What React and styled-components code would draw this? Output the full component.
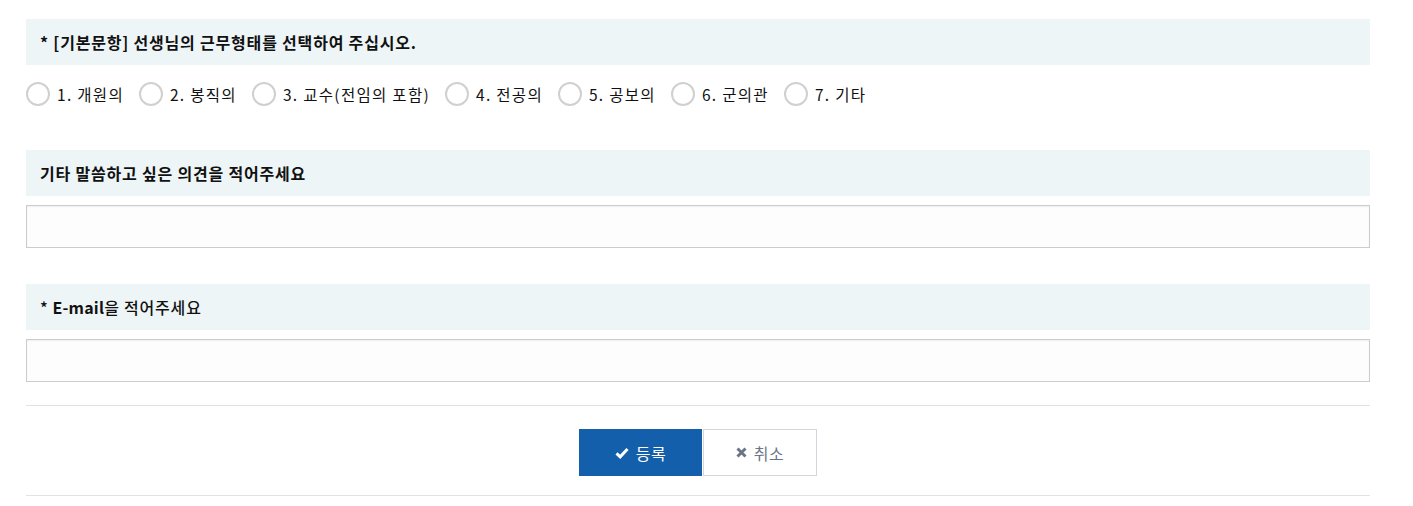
import React, { useState } from 'react';
import styled, { createGlobalStyle } from 'styled-components';

const GlobalStyle = createGlobalStyle`
  body {
    margin: 0;
    background: #fff;
    font-family: "Noto Sans CJK KR", "Noto Sans", sans-serif;
    color: #111;
  }
`;

const Form = styled.form`
  width: 1344px;
  margin: 19px 0 0 26px;
`;

const Section = styled.div`
  margin-bottom: ${props => props.gap || 0}px;
`;

const QuestionHead = styled.div`
  height: 46px;
  display: flex;
  align-items: center;
  padding-left: 14px;
  background: #eef5f7;
  font-size: 16px;
  letter-spacing: 0.8px;
  font-weight: ${props => (props.bold ? 700 : 500)};
`;

const Strong = styled.b`
  font-weight: 700;
  letter-spacing: 0.2px;
`;

const RadioRow = styled.div`
  display: flex;
  align-items: center;
  height: 58px;
  gap: 15px;
`;

const RadioLabel = styled.label`
  display: flex;
  align-items: center;
  gap: 7px;
  font-size: 15.5px;
  letter-spacing: 1.3px;
  cursor: pointer;
`;

const RadioCircle = styled.span`
  width: 20px;
  height: 20px;
  border-radius: 50%;
  border: 2px solid ${props => (props.checked ? '#135fab' : '#d0d0d0')};
  background: #fff;
  box-sizing: content-box;
  display: flex;
  align-items: center;
  justify-content: center;

  &::after {
    content: '';
    width: 10px;
    height: 10px;
    border-radius: 50%;
    background: ${props => (props.checked ? '#135fab' : 'transparent')};
  }
`;

const HiddenInput = styled.input`
  display: none;
`;

const TextInput = styled.input`
  display: block;
  box-sizing: border-box;
  width: 100%;
  height: 43px;
  margin-top: 9px;
  border: 1px solid #cccccc;
  box-shadow: inset 0 1px 2px rgba(0, 0, 0, 0.06);
  background: #fdfdfd;
  font-size: 14px;
  padding: 0 10px;
  outline: none;
`;

const Divider = styled.hr`
  border: none;
  border-top: 1px solid #e2e2e2;
  margin: 0;
`;

const ButtonBar = styled.div`
  display: flex;
  justify-content: center;
  padding: 23px 0 19px;
`;

const Button = styled.button`
  height: 47px;
  width: ${props => props.w}px;
  display: flex;
  align-items: center;
  justify-content: center;
  gap: 7px;
  font-family: inherit;
  font-size: 16px;
  letter-spacing: 0.5px;
  cursor: pointer;
  border: 1px solid ${props => (props.primary ? '#135fab' : '#d3d6dd')};
  background: ${props => (props.primary ? '#135fab' : '#fff')};
  color: ${props => (props.primary ? '#fff' : '#6b7588')};
  margin-left: ${props => (props.primary ? 0 : 1)}px;
`;

const options = ['1. 개원의', '2. 봉직의', '3. 교수(전임의 포함)', '4. 전공의', '5. 공보의', '6. 군의관', '7. 기타'];

const CheckIcon = () => (
  <svg width="14" height="12" viewBox="0 0 14 12">
    <path d="M1.5 6.3 L5.2 9.8 L12.5 2" fill="none" stroke="#fff" strokeWidth="3" />
  </svg>
);

const XIcon = () => (
  <svg width="11" height="11" viewBox="0 0 11 11">
    <path d="M1.5 1.5 L9.5 9.5 M9.5 1.5 L1.5 9.5" fill="none" stroke="#6b7588" strokeWidth="3" />
  </svg>
);

export default function App() {
  const [job, setJob] = useState(null);

  return (
    <>
      <GlobalStyle />
      <Form onSubmit={e => e.preventDefault()}>
        <Section gap={27}>
          <QuestionHead bold>* [기본문항] 선생님의 근무형태를 선택하여 주십시오.</QuestionHead>
          <RadioRow>
            {options.map((o, i) => (
              <RadioLabel key={o}>
                <HiddenInput type="radio" name="job" checked={job === i} onChange={() => setJob(i)} />
                <RadioCircle checked={job === i} />
                {o}
              </RadioLabel>
            ))}
          </RadioRow>
        </Section>
        <Section gap={36}>
          <QuestionHead bold>기타 말씀하고 싶은 의견을 적어주세요</QuestionHead>
          <TextInput type="text" />
        </Section>
        <Section gap={23}>
          <QuestionHead>* <Strong>&nbsp;E-mail</Strong>을 적어주세요</QuestionHead>
          <TextInput type="text" />
        </Section>
        <Divider />
        <ButtonBar>
          <Button primary w={123} type="submit"><CheckIcon />등록</Button>
          <Button w={114} type="button"><XIcon />취소</Button>
        </ButtonBar>
        <Divider />
      </Form>
    </>
  );
}
